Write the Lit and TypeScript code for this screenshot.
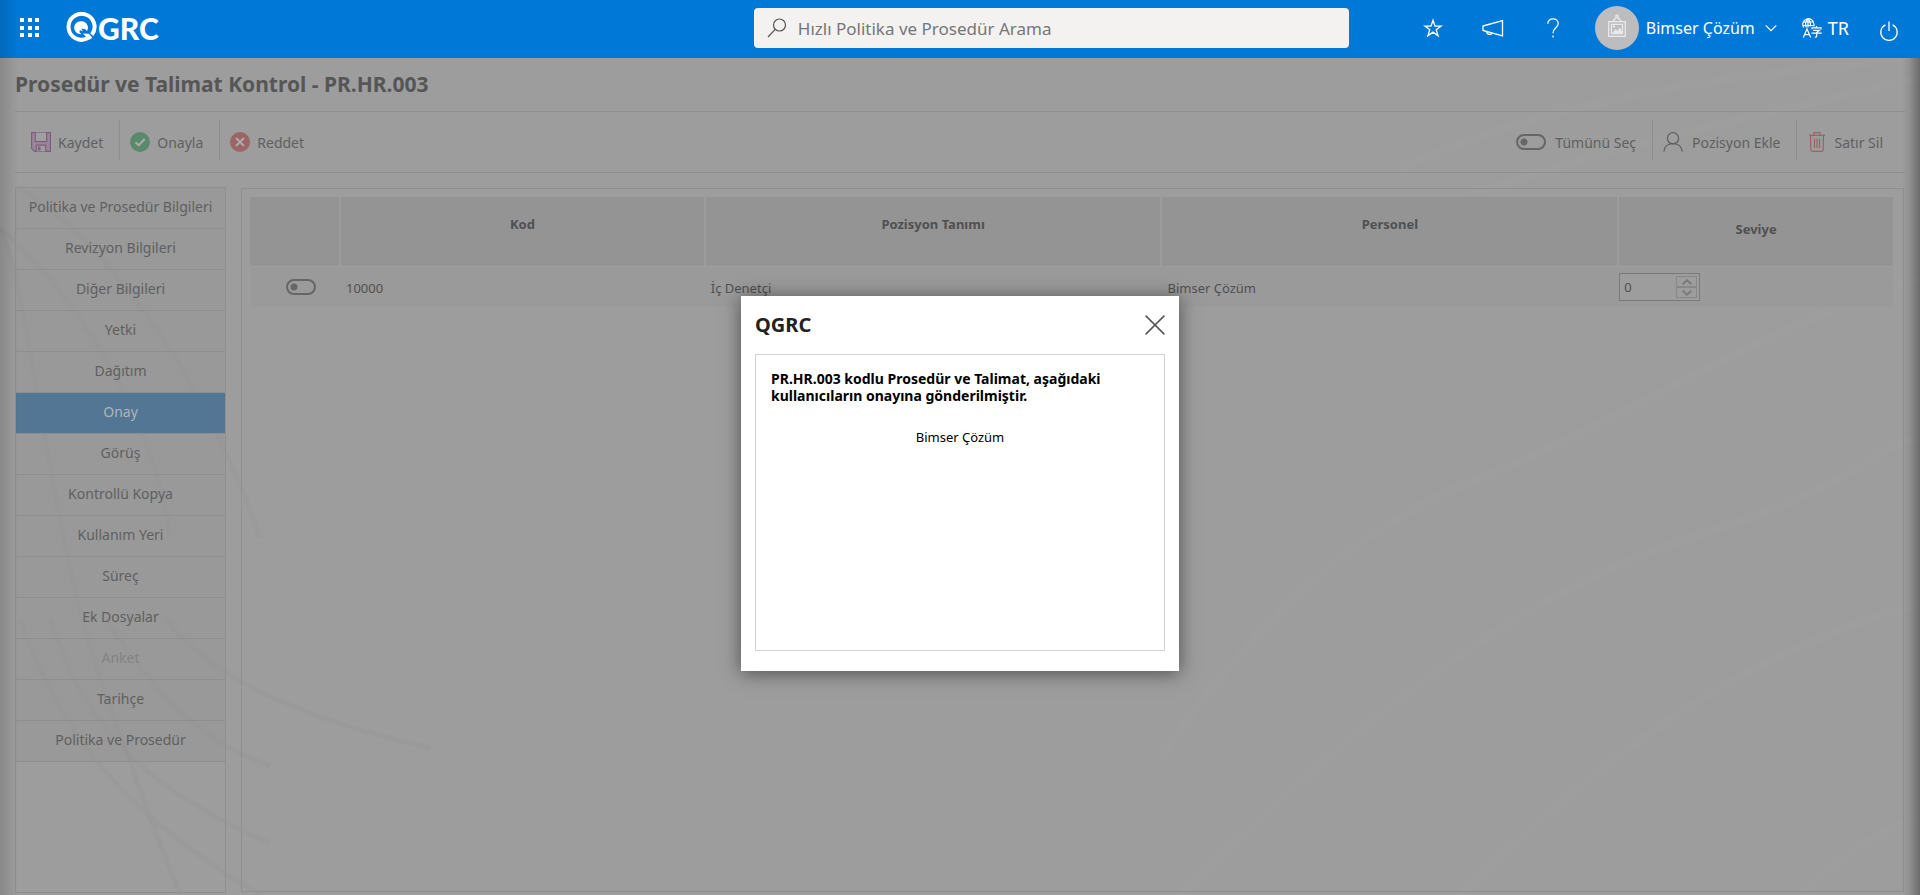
import { LitElement, html, css, svg } from 'lit';
import { customElement, property, state } from 'lit/decorators.js';
import { classMap } from 'lit/directives/class-map.js';

const icons = {
  apps: svg`<svg width="20" height="20" viewBox="0 0 20 20" fill="currentColor">
    ${[0, 8, 15].map((y) => [0, 8, 15].map((x) => svg`<rect x=${x} y=${y} width="4" height="4"/>`))}</svg>`,
  mark: svg`<svg width="32" height="32" viewBox="0 0 32 32" fill="none">
    <path d="M22.6 26.3A13 13 0 1 1 26.8 22.8" stroke="currentColor" stroke-width="4"/>
    <path d="M9.2 14.8a7 7 0 0 1 13.6-.6c.4 1.700 0 3.600-.8 4.800l-2.200-2-3.600-.200 1.800 2.800-3.200-1.700-.3 2.400 2 1.800c-4.300.4-7.600-2.800-7.300-7.300Z" fill="currentColor"/>
    <path d="M18 21.500l5.500 6.500c1.200-.6 3-1.700 3.700-2.600l-3.400-3.600Z" fill="currentColor"/></svg>`,
  search: svg`<svg width="20" height="20" viewBox="0 0 20 20" fill="none" stroke="#555" stroke-width="1.200">
    <circle cx="12.500" cy="7" r="6"/><path d="M8.200 11.400 1 19"/></svg>`,
  star: svg`<svg width="20" height="20" viewBox="0 0 20 20" fill="none" stroke="currentColor" stroke-width="1.300">
    <path d="M10 2.200l2 5.900h6.200l-5 3.700 1.900 6L10 14.100l-5.100 3.700 1.900-6-5-3.700H8Z"/></svg>`,
  megaphone: svg`<svg width="22" height="20" viewBox="0 0 22 20" fill="none" stroke="currentColor" stroke-width="1.300">
    <path d="M1 8 20.500 2.700v15.100L1 12.500ZM4.500 13.600c.2 2.800 4.500 3.900 5.400 1.400"/></svg>`,
  help: svg`<svg width="20" height="20" viewBox="0 0 20 20" fill="none" stroke="currentColor" stroke-width="1.300">
    <path d="M4.800 5.800C4.800 2.800 7 .9 10 .9s5.200 1.900 5.200 4.700c0 4.200-5.200 4.400-5.200 9.600M10 17.500v2"/></svg>`,
  picture: svg`<svg width="20" height="24" viewBox="0 0 20 24" fill="none" stroke="#e9e9ea" stroke-width="1.300">
    <path d="M1.700 7.700h16.600v14.600H1.700ZM4.500 10.300h11v9.400h-11Z"/><path d="M6 7l4-4 4 4"/>
    <circle cx="10" cy="2.300" r="1.200" fill="#bdbdbf"/><path d="M5.500 19l3-4 2 2 2.500-3.500 2.500 5.500Z" fill="#e9e9ea" stroke="none"/>
    <rect x="6" y="11.500" width="2" height="2" fill="#e9e9ea" stroke="none"/></svg>`,
  chevron: svg`<svg width="12" height="12" viewBox="0 0 12 12" fill="none" stroke="currentColor" stroke-width="1.200"><path d="M.7 3.400 6 8.700l5.300-5.300"/></svg>`,
  translate: svg`<svg width="20" height="20" viewBox="0 0 20 20" fill="none" stroke="currentColor" stroke-width="1.200">
    <path d="M12 8.500V6.200A5.600 5.600 0 1 0 1.800 9.500M.6 4h10.800M.6 7.500H12M6 .6v8.900M4.500 9.500C3 7 3.200 3 6 .6 8.500 3 8.800 6 8 8.500"/>
    <path d="M1.300 19.500 5 11l3.700 8.500M2.500 16.700h5M10 11.300V9.800h9v1.500M14.500 8v1.800M11.300 12.300h6.200l-2.800 2.200V18c0 1-.5 1.200-1.900 1M9.500 15.200h10.300"/></svg>`,
  power: svg`<svg width="20" height="22" viewBox="0 0 20 22" fill="none" stroke="currentColor" stroke-width="1.300">
    <path d="M6.400 4.800a8.200 8.200 0 1 0 7.200 0M10 1.500v9.500"/></svg>`,
  save: svg`<svg width="20" height="20" viewBox="0 0 20 20" fill="none" stroke="#7f5c7d" stroke-width="1.200">
    <path d="M.6.6h18.800v18.800H3.500L.6 16.500Z" fill="#988898"/><path d="M4.300.6v9.100h11.400V.6" fill="#a09fa0"/>
    <path d="M5.300 19.400v-6.200h9.400v6.200" fill="#a09fa0"/><path d="M7.500 15.200h1.400v2.600H7.500Z"/></svg>`,
  check: svg`<svg width="20" height="20" viewBox="0 0 20 20"><circle cx="10" cy="10" r="10" fill="#5a8a6b"/>
    <path d="m5.500 10.300 3.200 3 6-6.300" fill="none" stroke="#aaa" stroke-width="2.200"/></svg>`,
  reject: svg`<svg width="20" height="20" viewBox="0 0 20 20"><circle cx="10" cy="10" r="10" fill="#9d6464"/>
    <path d="m6 6 8 8m0-8-8 8" fill="none" stroke="#aaa" stroke-width="2.200"/></svg>`,
  person: svg`<svg width="20" height="20" viewBox="0 0 20 20" fill="none" stroke="currentColor" stroke-width="1.300">
    <circle cx="10" cy="6.300" r="5.600"/><path d="M.9 19.500c.3-5 4-7.800 9.100-7.800s8.800 2.800 9.100 7.800"/></svg>`,
  trash: svg`<svg width="16" height="20" viewBox="0 0 16 20" fill="none" stroke="#9b6464" stroke-width="1.200">
    <path d="M0 3.300h16M5 3V.7h6V3M1.500 3.300l.3 14.200c0 1.200.7 1.900 1.700 1.900h9c1 0 1.700-.7 1.700-1.900l.3-14.200M5.500 6.500v9.500M8 6.500v9.500M10.500 6.500v9.500"/></svg>`,
  close: svg`<svg width="20" height="20" viewBox="0 0 20 20" fill="none" stroke="#555" stroke-width="1.500"><path d="m.6.6 18.800 18.800m0-18.800L.6 19.400"/></svg>`,
  up: svg`<svg width="10" height="6" viewBox="0 0 10 6" fill="none" stroke="#7b7b7b" stroke-width="2"><path d="m.7 5.300 4.300-4 4.300 4"/></svg>`,
  down: svg`<svg width="10" height="6" viewBox="0 0 10 6" fill="none" stroke="#7b7b7b" stroke-width="2"><path d="m.7.7 4.300 4 4.300-4"/></svg>`,
};

const reset = css`
  :host, *, *::before, *::after { box-sizing: border-box; }
  button, input { font: inherit; color: inherit; margin: 0; }
  button { background: none; border: 0; padding: 0; cursor: pointer; }
  svg { display: block; flex: none; }
`;

const toggle = css`
  .toggle {
    appearance: none; flex: none; width: 30px; height: 16px; margin: 0;
    border: 2px solid #666; border-radius: 8px;
    background: radial-gradient(circle at 6px 6px, #666 3px, transparent 4px);
  }
`;

@customElement('app-header')
class AppHeader extends LitElement {
  static styles = [reset, css`
    :host {
      display: flex; align-items: center; height: 58px; padding: 0 21px 2px 20px;
      background: #0078d7; color: #fff; font-size: 16px;
    }
    .brand { flex: 1; display: flex; align-items: center; }
    .logo {
      display: flex; align-items: center; gap: 1px; margin-left: 25px;
      color: #fff; text-decoration: none; font: 900 30px/32px Lato, sans-serif;
    }
    .search {
      flex: 0 1 595px; display: flex; align-items: center; gap: 11px; height: 40px;
      padding: 0 13px; background: #f3f2f1; border-radius: 4px;
    }
    .query { flex: 1; min-width: 0; border: 0; outline: 0; padding: 0; background: none; font-size: 17px; color: #333; }
    .query::placeholder { color: #767676; opacity: 1; }
    .actions { display: flex; align-items: center; gap: 39px; margin-left: 74px; }
    .user { display: flex; align-items: center; gap: 7px; margin-left: -7px; }
    .user .chev { margin-left: 3px; }
    .avatar { display: grid; place-items: center; width: 44px; height: 44px; padding-bottom: 4px; border-radius: 50%; background: #bdbdbf; }
    .lang { display: flex; align-items: center; gap: 6px; margin-left: -14px; font-size: 18px; }
    .power { margin: 6px 0 0 -9px; }
  `];
  render() {
    return html`
      <div class="brand">
        <button aria-label="Menü">${icons.apps}</button>
        <a class="logo" href="#">${icons.mark}<span>GRC</span></a>
      </div>
      <label class="search">${icons.search}
        <input class="query" type="search" aria-label="Hızlı Politika ve Prosedür Arama" placeholder="Hızlı Politika ve Prosedür Arama">
      </label>
      <div class="actions">
        <button aria-label="Favoriler">${icons.star}</button>
        <button aria-label="Duyurular">${icons.megaphone}</button>
        <button aria-label="Yardım">${icons.help}</button>
        <button class="user"><span class="avatar">${icons.picture}</span><span>Bimser Çözüm</span><span class="chev">${icons.chevron}</span></button>
        <button class="lang">${icons.translate}<span>TR</span></button>
        <button class="power" aria-label="Çıkış">${icons.power}</button>
      </div>`;
  }
}

@customElement('action-bar')
class ActionBar extends LitElement {
  static styles = [reset, toggle, css`
    :host {
      display: flex; justify-content: space-between; height: 62px; padding-top: 8px;
      border-top: 1px solid #8f8f8f; border-bottom: 1px solid #8f8f8f; color: #606060; font-size: 14px;
    }
    .group { display: flex; height: 40px; }
    .item { display: flex; align-items: center; gap: 7px; padding: 4px 16px 0 10px; }
    .item + .item { border-left: 1px solid #8f8f8f; }
    .left .item:first-child { padding-left: 16px; }
    .right .item { gap: 9px; }
    .right .item:last-child { padding-right: 22px; padding-left: 12px; }
  `];
  render() {
    return html`
      <div class="group left">
        <button class="item">${icons.save}<span>Kaydet</span></button>
        <button class="item">${icons.check}<span>Onayla</span></button>
        <button class="item">${icons.reject}<span>Reddet</span></button>
      </div>
      <div class="group right">
        <label class="item"><input class="toggle" type="checkbox"><span>Tümünü Seç</span></label>
        <button class="item">${icons.person}<span>Pozisyon Ekle</span></button>
        <button class="item">${icons.trash}<span>Satır Sil</span></button>
      </div>`;
  }
}

@customElement('section-menu')
class SectionMenu extends LitElement {
  static styles = [reset, css`
    :host { display: block; border: 1px solid #8f8f8f; font-size: 14px; color: #606060; }
    .entry {
      display: block; width: 100%; height: 41px; padding-bottom: 3px; text-align: center;
      background: rgba(140, 140, 140, .2); border-bottom: 1px solid #8e8e8e;
    }
    .entry.active { background: #527693; color: #b0b4b8; }
    .entry:disabled { color: #838383; }
  `];
  @property() active = 'Onay';
  private entries = ['Politika ve Prosedür Bilgileri', 'Revizyon Bilgileri', 'Diğer Bilgileri', 'Yetki', 'Dağıtım', 'Onay',
    'Görüş', 'Kontrollü Kopya', 'Kullanım Yeri', 'Süreç', 'Ek Dosyalar', 'Anket', 'Tarihçe', 'Politika ve Prosedür'];
  render() {
    return html`${this.entries.map((name) => html`
      <button class=${classMap({ entry: true, active: name === this.active })} ?disabled=${name === 'Anket'}
        @click=${() => (this.active = name)}>${name}</button>`)}`;
  }
}

@customElement('position-table')
class PositionTable extends LitElement {
  static styles = [reset, toggle, css`
    :host { display: block; margin: 1px 1px 1px 0; border: 1px solid #8f8f8f; padding: 8px 10px 8px 8px; font-size: 13px; color: #505050; }
    .grid { width: 100%; table-layout: fixed; border-collapse: separate; border-spacing: 0; }
    .c1 { width: 91px; } .c2 { width: 22.200%; } .c3, .c4 { width: 27.800%; }
    th {
      height: 70px; padding: 0 0 15px; background: #949494; background-clip: padding-box;
      border-right: 2px solid #9c9c9c; border-bottom: 1px solid #9f9f9f;
    }
    th:last-child { padding-bottom: 6px; border-right: 0; }
    td { height: 40px; padding: 2px 0 0 5px; background: #9a9a9a; }
    .pick { padding: 0 0 0 10px; text-align: center; }
    .pick .toggle { display: block; margin: 0 auto; }
    .num { padding: 0; }
    .spin { display: flex; align-items: center; width: 81px; height: 28px; padding-right: 2px; border: 1px solid #7a7a7a; background: #9d9d9d; }
    .value { flex: 1; min-width: 0; border: 0; outline: 0; padding: 0 0 0 4px; background: none; appearance: textfield; }
    .value::-webkit-inner-spin-button { appearance: none; }
    .steps { display: grid; width: 21px; }
    .step { display: grid; place-items: center; height: 11px; border: 1px solid #888; }
  `];
  @state() private level = 0;
  render() {
    return html`
      <table class="grid">
        <colgroup><col class="c1"><col class="c2"><col class="c3"><col class="c4"><col></colgroup>
        <thead><tr><th></th><th>Kod</th><th>Pozisyon Tanımı</th><th>Personel</th><th>Seviye</th></tr></thead>
        <tbody><tr>
          <td class="pick"><input class="toggle" type="checkbox" aria-label="10000"></td>
          <td>10000</td><td>İç Denetçi</td><td>Bimser Çözüm</td>
          <td class="num"><div class="spin">
            <input class="value" type="number" aria-label="Seviye" .value=${String(this.level)}>
            <div class="steps">
              <button class="step" aria-label="Artır" @click=${() => this.level++}>${icons.up}</button>
              <button class="step" aria-label="Azalt" @click=${() => this.level--}>${icons.down}</button>
            </div></div></td>
        </tr></tbody>
      </table>`;
  }
}

@customElement('message-dialog')
class MessageDialog extends LitElement {
  static styles = [reset, css`
    :host {
      display: flex; flex-direction: column; width: 438px; min-height: 375px; padding: 0 14px 20px;
      background: #fff; box-shadow: 0 2px 18px rgba(0, 0, 0, .5); font-size: 13px; line-height: 17px; color: #000;
    }
    .head { display: flex; align-items: center; justify-content: space-between; height: 58px; }
    .title { margin: 0; font-size: 20px; line-height: 28px; color: #222; }
    .body { flex: 1; padding: 15px; border: 1px solid #d3d3d3; }
    .lead { margin: 0 0 25px; font-size: 14px; font-weight: 700; }
    .names { margin: 0; text-align: center; }
  `];
  render() {
    return html`
      <div class="head"><h2 class="title">QGRC</h2><button aria-label="Kapat">${icons.close}</button></div>
      <div class="body">
        <p class="lead">PR.HR.003 kodlu Prosedür ve Talimat, aşağıdaki kullanıcıların onayına gönderilmiştir.</p>
        <p class="names">Bimser Çözüm</p>
      </div>`;
  }
}

@customElement('app-root')
class AppRoot extends LitElement {
  static styles = [reset, css`
    :host {
      position: relative; display: flex; flex-direction: column; min-height: 100vh; overflow: hidden;
      background: #9d9d9d; font-family: "Noto Sans", "Open Sans", sans-serif;
    }
    .waves { position: absolute; inset: 58px 0 0; width: 100%; height: calc(100% - 58px); }
    .page { position: relative; flex: 1; display: flex; flex-direction: column; padding: 0 15px 2px; }
    .heading { margin: 0; font-size: 21px; line-height: 53px; color: #565656; }
    .content { flex: 1; display: grid; grid-template-columns: 211px minmax(0, 1fr); gap: 15px; padding-top: 14px; }
    .edge { position: absolute; inset: 0 auto 0 0; width: 18px; background: linear-gradient(90deg, rgba(0, 0, 0, .13), transparent); pointer-events: none; }
    .edge.right { inset: 58px 0 0 auto; background: linear-gradient(270deg, rgba(0, 0, 0, .32), rgba(0, 0, 0, .08) 60%, transparent); }
    .overlay { position: absolute; inset: 0; display: grid; place-items: center; padding-top: 72px; }
  `];
  render() {
    return html`
      <app-header></app-header>
      <svg class="waves" viewBox="0 0 1920 837" preserveAspectRatio="none" fill="none" aria-hidden="true">
        <g stroke="#8f8f8f" stroke-opacity=".14" stroke-width="5">
          <path d="M0 170C30 230 50 480 100 620S150 760 180 837"/>
          <path d="M0 170C100 260 160 390 170 480"/>
          <path d="M20 130C130 200 220 360 260 480"/>
          <path d="M20 560C60 680 130 760 260 837"/>
          <path d="M50 560C90 690 170 740 270 785"/>
          <path d="M105 560C170 660 220 690 270 708"/>
          <path d="M165 560C210 620 300 660 430 690"/>
        </g>
        <g stroke="#a5a5a5" stroke-opacity=".22" stroke-width="9">
          <path d="M1160 700C1250 570 1350 470 1480 420S1780 260 1920 220"/>
          <path d="M1180 837C1330 690 1500 540 1690 480S1860 390 1920 380"/>
          <path d="M1460 837C1580 720 1720 600 1920 545"/>
          <path d="M1800 837C1840 800 1880 770 1920 760"/>
          <path d="M1400 110C1560 40 1700 20 1920 0"/>
          <path d="M1410 160C1560 100 1700 70 1920 20"/>
        </g>
      </svg>
      <main class="page">
        <h1 class="heading">Prosedür ve Talimat Kontrol - PR.HR.003</h1>
        <action-bar></action-bar>
        <div class="content"><section-menu></section-menu><position-table></position-table></div>
      </main>
      <div class="edge"></div>
      <div class="edge right"></div>
      <div class="overlay"><message-dialog role="dialog" aria-label="QGRC"></message-dialog></div>`;
  }
}
